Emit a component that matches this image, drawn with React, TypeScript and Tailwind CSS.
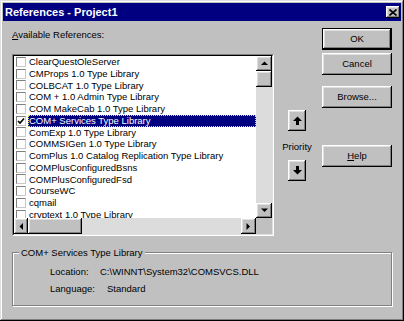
const items = [
  'ClearQuestOleServer',
  'CMProps 1.0 Type Library',
  'COLBCAT 1.0 Type Library',
  'COM + 1.0 Admin Type Library',
  'COM MakeCab 1.0 Type Library',
  'COM+ Services Type Library',
  'ComExp 1.0 Type Library',
  'COMMSIGen 1.0 Type Library',
  'ComPlus 1.0 Catalog Replication Type Library',
  'COMPlusConfiguredBsns',
  'COMPlusConfiguredFsd',
  'CourseWC',
  'cqmail',
  'crvptext 1.0 Type Library',
];

const raised =
  'bg-[#c0c0c0] shadow-[inset_-1px_-1px_0_#000,inset_1px_1px_0_#fff,inset_-2px_-2px_0_#808080,inset_2px_2px_0_#dfdfdf]';

function Tri({ dir }: { dir: 'up' | 'down' | 'left' | 'right' }) {
  const pts = {
    up: '0,4 7,4 3.5,0.5',
    down: '0,0.5 7,0.5 3.5,4',
    left: '4,0 4,7 0.5,3.5',
    right: '0.5,0 0.5,7 4,3.5',
  }[dir];
  const vert = dir === 'up' || dir === 'down';
  return (
    <svg width={vert ? 7 : 5} height={vert ? 5 : 7} viewBox={vert ? '0 0 7 5' : '0 0 5 7'}>
      <polygon points={pts} fill="#000" />
    </svg>
  );
}

function ScrollBtn({ dir, className }: { dir: 'up' | 'down' | 'left' | 'right'; className: string }) {
  return (
    <div className={`${raised} ${className} flex items-center justify-center shrink-0`}>
      <Tri dir={dir} />
    </div>
  );
}

function Button({ children, isDefault }: { children: React.ReactNode; isDefault?: boolean }) {
  return (
    <div className={`w-[70px] h-[22px] ${isDefault ? 'border border-black' : ''}`}>
      <div className={`${raised} w-full h-full flex items-center justify-center`}>{children}</div>
    </div>
  );
}

function PriorityArrow({ up }: { up?: boolean }) {
  return (
    <div className={`${raised} w-[18px] h-[21px] flex items-center justify-center`}>
      <svg width="9" height="9" viewBox="0 0 9 9" className={up ? '' : 'rotate-180'}>
        <polygon points="4.5,0.5 9,5 6,5 6,9 3,9 3,5 0,5" fill="#000" />
      </svg>
    </div>
  );
}

function ListRow({ label, selected }: { label: string; selected?: boolean }) {
  return (
    <div className="flex items-center h-[11.75px] shrink-0">
      <span className="ml-[2px] w-[10px] h-[10px] bg-white border border-t-[#808080] border-l-[#808080] border-r-[#c8c8c8] border-b-[#c8c8c8] flex items-center justify-center shrink-0">
        {selected && (
          <svg width="8" height="8" viewBox="0 0 8 8">
            <path d="M1 4 L3 6 L7 1.5" stroke="#000" strokeWidth="1.6" fill="none" />
          </svg>
        )}
      </span>
      <span
        className={`ml-[2px] pl-[1px] h-full flex-1 whitespace-nowrap leading-[11.75px] ${
          selected ? 'bg-[#000080] text-white outline-1 outline-dotted outline-[#e8e060] -outline-offset-1' : ''
        }`}
      >
        {label}
      </span>
    </div>
  );
}

export default function App() {
  return (
    <div className="w-[404px] h-[321px] bg-[#c0c0c0] p-[3px] flex flex-col text-black text-[9.5px] font-['Liberation_Sans',Arial,sans-serif] shadow-[inset_-1px_-1px_0_#000,inset_1px_1px_0_#dfdfdf,inset_-2px_-2px_0_#808080,inset_2px_2px_0_#fff]">
      <div className="h-[18px] bg-[#000080] flex items-center justify-between pl-[2px] pr-[1px] shrink-0">
        <span className="text-white font-bold text-[11px]">References - Project1</span>
        <div className={`${raised} w-[14px] h-[12px] flex items-center justify-center`}>
          <svg width="8" height="7" viewBox="0 0 8 7">
            <path d="M0.5 0.5 L7.5 6.5 M7.5 0.5 L0.5 6.5" stroke="#000" strokeWidth="1.6" />
          </svg>
        </div>
      </div>

      <div className="flex-1 px-[9px] flex flex-col">
        <div className="flex">
          <div className="flex flex-col w-[262px]">
            <div className="mt-[7px] leading-[13px]">
              <span className="underline">A</span>vailable References:
            </div>
            <div className="mt-[13px] h-[182px] border border-t-[#808080] border-l-[#808080] border-r-white border-b-white">
              <div className="w-full h-full border border-t-black border-l-black border-r-[#dfdfdf] border-b-[#dfdfdf] bg-white grid grid-cols-[1fr_16px] grid-rows-[1fr_16px]">
                <div className="overflow-hidden flex flex-col">
                  {items.map((it) => (
                    <ListRow key={it} label={it} selected={it === 'COM+ Services Type Library'} />
                  ))}
                </div>
                <div className="flex flex-col">
                  <ScrollBtn dir="up" className="h-[15px]" />
                  <div className={`${raised} h-[16px]`} />
                  <div className="flex-1 bg-[#dcdcdc]" />
                  <ScrollBtn dir="down" className="h-[15px]" />
                </div>
                <div className="flex">
                  <ScrollBtn dir="left" className="w-[14px]" />
                  <div className={`${raised} w-[54px]`} />
                  <div className="flex-1 bg-[#dcdcdc]" />
                  <ScrollBtn dir="right" className="w-[15px]" />
                </div>
                <div className="bg-[#c0c0c0]" />
              </div>
            </div>
          </div>

          <div className="ml-[6px] w-[34px] flex flex-col items-center">
            <div className="mt-[89px]">
              <PriorityArrow up />
            </div>
            <div className="mt-[9px] leading-[13px]">Priority</div>
            <div className="mt-[7px]">
              <PriorityArrow />
            </div>
          </div>

          <div className="ml-[8px] flex flex-col">
            <div className="mt-[7px]">
              <Button isDefault>OK</Button>
            </div>
            <div className="mt-[3px]">
              <Button>Cancel</Button>
            </div>
            <div className="mt-[11px]">
              <Button>Browse...</Button>
            </div>
            <div className="mt-[37px]">
              <Button>
                <span className="underline">H</span>elp
              </Button>
            </div>
          </div>
        </div>

        <fieldset className="mt-[10px] h-[60px] w-[380px] border border-[#808080] shadow-[inset_1px_1px_0_#fff,1px_1px_0_#fff]">
          <legend className="ml-[6px] px-[2px] bg-[#c0c0c0] leading-[13px]">COM+ Services Type Library</legend>
          <div className="mt-[6px] ml-[37px] flex leading-[13px]">
            <span className="w-[50px]">Location:</span>
            <span>C:\WINNT\System32\COMSVCS.DLL</span>
          </div>
          <div className="mt-[4px] ml-[37px] flex leading-[13px]">
            <span className="w-[57px]">Language:</span>
            <span>Standard</span>
          </div>
        </fieldset>
      </div>
    </div>
  );
}
